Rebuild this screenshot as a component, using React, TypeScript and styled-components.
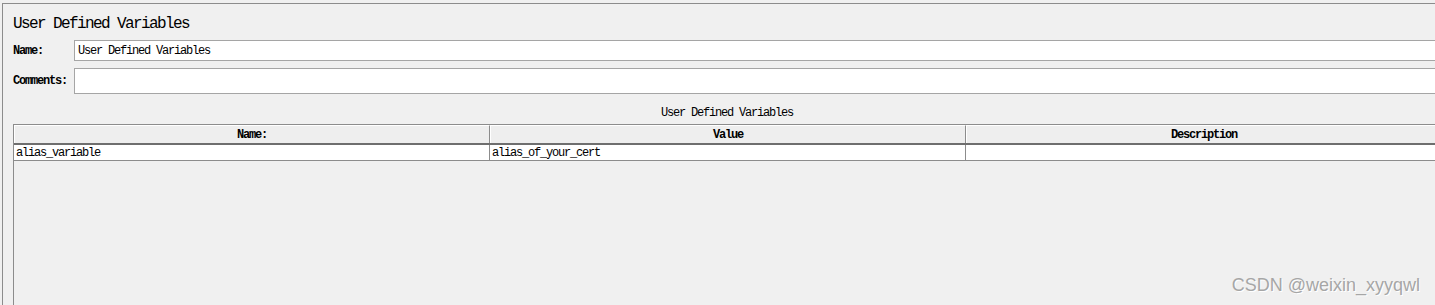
import React from 'react';
import styled, { createGlobalStyle } from 'styled-components';

const rows = [{ name: 'alias_variable', value: 'alias_of_your_cert', description: '' }];

export default function App() {
  return (
    <>
      <GlobalStyle />
      <Page>
        <Frame>
          <Title>User Defined Variables</Title>
          <Field>
            <Label>Name:</Label>
            <Input height={21}>User Defined Variables</Input>
          </Field>
          <Field>
            <Label>Comments:</Label>
            <Input height={26} />
          </Field>
          <Caption>User Defined Variables</Caption>
          <Table>
            <HeaderRow>
              <HeaderCell>Name:</HeaderCell>
              <HeaderCell>Value</HeaderCell>
              <HeaderCell>Description</HeaderCell>
            </HeaderRow>
            {rows.map(row => (
              <DataRow key={row.name}>
                <DataCell>{row.name}</DataCell>
                <DataCell>{row.value}</DataCell>
                <DataCell>{row.description}</DataCell>
              </DataRow>
            ))}
          </Table>
        </Frame>
        <Watermark>CSDN @weixin_xyyqwl</Watermark>
      </Page>
    </>
  );
}

const GlobalStyle = createGlobalStyle`
  html, body {
    margin: 0;
    padding: 0;
    background: #f0f0f0;
  }
`;

const Page = styled.div`
  position: relative;
  width: 1435px;
  height: 305px;
  overflow: hidden;
  background: #f0f0f0;
  font-family: "Liberation Mono", "DejaVu Sans Mono", monospace;
  color: #000;
`;

const Frame = styled.div`
  margin: 3px 0 0 2px;
  width: 1460px;
  height: 320px;
  box-sizing: border-box;
  border-top: 1px solid #8c8c8c;
  border-left: 1px solid #8c8c8c;
  padding: 0 0 0 10px;
`;

const Title = styled.div`
  font-size: 16px;
  letter-spacing: -1.6px;
  line-height: 16px;
  padding: 12px 0 8px;
`;

const Field = styled.div`
  display: grid;
  grid-template-columns: 61px 1fr;
  align-items: center;
  margin-bottom: 7px;
`;

const Label = styled.div`
  font-size: 12px;
  letter-spacing: -1.2px;
  font-weight: bold;
`;

const Input = styled.div<{ height: number }>`
  height: ${props => props.height}px;
  box-sizing: border-box;
  background: #fff;
  border: 1px solid #a5a5a5;
  padding: 0 3px;
  font-size: 12px;
  letter-spacing: -1.2px;
  display: flex;
  align-items: center;
`;

const Caption = styled.div`
  width: 1428px;
  text-align: center;
  font-size: 12px;
  letter-spacing: -1.2px;
  line-height: 14px;
  padding: 5px 0 4px;
`;

const Table = styled.div`
  width: 1428px;
  height: 200px;
  box-sizing: border-box;
  border-top: 1px solid #8c8c8c;
  border-left: 1px solid #8c8c8c;
  background: #f0f0f0;
`;

const HeaderRow = styled.div`
  display: grid;
  grid-template-columns: repeat(3, 476px);
  height: 20px;
  border-bottom: 2px solid #6e6e6e;
  box-sizing: border-box;
`;

const HeaderCell = styled.div`
  display: flex;
  align-items: center;
  justify-content: center;
  background: #eeeeee;
  border-left: 1px solid #fff;
  border-top: 1px solid #fff;
  border-right: 1px solid #8c8c8c;
  font-size: 12px;
  letter-spacing: -1.2px;
  font-weight: bold;
`;

const DataRow = styled.div`
  display: grid;
  grid-template-columns: repeat(3, 476px);
  height: 16px;
  box-sizing: border-box;
  background: #fff;
  border-bottom: 1px solid #8c8c8c;
`;

const DataCell = styled.div`
  display: flex;
  align-items: center;
  padding-left: 2px;
  border-right: 1px solid #8c8c8c;
  font-size: 12px;
  letter-spacing: -1.2px;
`;

const Watermark = styled.div`
  position: absolute;
  right: 15px;
  bottom: 9px;
  font-family: "Liberation Sans", Arial, sans-serif;
  font-size: 18px;
  color: #a6a6a6;
  text-shadow: 1px 1px 0 #fff;
`;
